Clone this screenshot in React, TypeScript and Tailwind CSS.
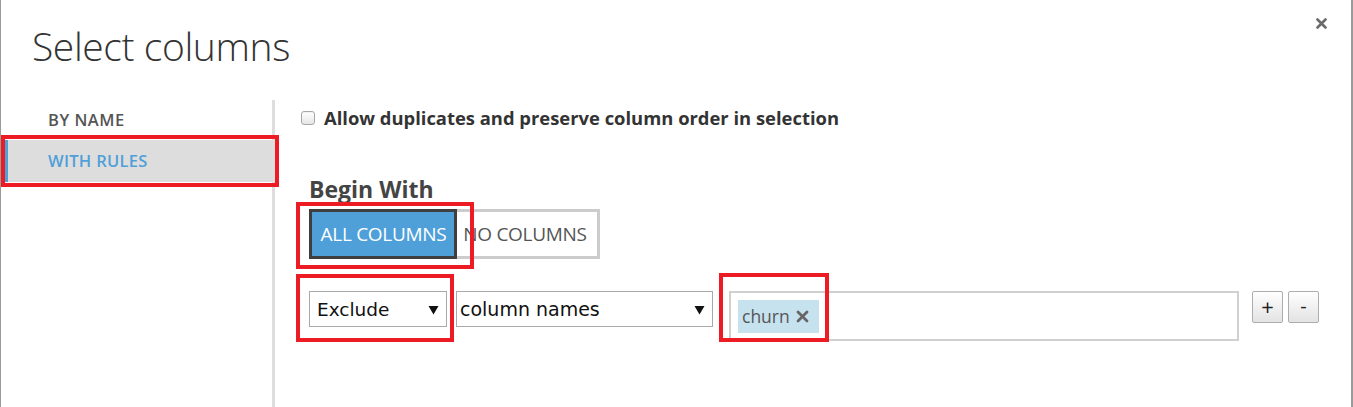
import React from "react";

function Caret() {
  return (
    <svg width="11" height="10" viewBox="0 0 11 10" className="shrink-0">
      <path d="M0.5 1 L10.5 1 L5.5 9.5 Z" fill="#111" />
    </svg>
  );
}

function RedBox({ className }: { className: string }) {
  return <div className={"absolute border-4 border-[#ed1c24] pointer-events-none " + className} />;
}

export default function App() {
  return (
    <div className="relative w-[1353px] h-[407px] bg-white border-l border-l-[#9a9a9a] border-r-2 border-r-[#9a9a9a] overflow-hidden font-['Open_Sans',sans-serif] text-[#444]">
      {/* close */}
      <button className="absolute left-[1314px] top-[17px] w-[13px] h-[13px] flex items-center justify-center">
        <svg width="11" height="11" viewBox="0 0 11 11">
          <path d="M1.5 1.5 L9.5 9.5 M9.5 1.5 L1.5 9.5" stroke="#6b6b6b" strokeWidth="2.6" strokeLinecap="round" />
        </svg>
      </button>

      <div className="h-[100px] pl-[31px] pt-[22px]">
        <h1 className="text-[39px] leading-[48px] font-light text-[#333] tracking-[-0.4px]">Select columns</h1>
      </div>

      <div className="flex h-[307px]">
        <aside className="w-[274px] shrink-0 border-r-[3px] border-r-[#dedede] pl-[2px]">
          <div className="h-[40px] flex items-center pl-[45px] text-[16.5px] font-semibold text-[#555] tracking-[0.5px]">
            BY NAME
          </div>
          <div className="h-[42px] flex items-center bg-[#dddddd] border-l-[5px] border-l-[#4f9fd9] pl-[40px] text-[16.5px] font-semibold text-[#4f9fd9] tracking-[0.3px]">
            WITH RULES
          </div>
        </aside>

        <main className="flex-1 pl-[26px]">
          <label className="flex items-center gap-[9px] mt-[6px] h-[24px]">
            <span className="w-[14px] h-[14px] rounded-[3px] border border-[#a8a8a8] bg-gradient-to-b from-white to-[#e6e6e6] shadow-[inset_0_1px_1px_rgba(0,0,0,0.05)]" />
            <span className="text-[18.4px] font-bold text-[#333] tracking-[0px]">
              Allow duplicates and preserve column order in selection
            </span>
          </label>

          <div className="pl-[8px]">
            <h2 className="mt-[45px] text-[23px] leading-[28px] font-bold text-[#444] tracking-[0px]">Begin With</h2>

            <div className="flex mt-[6px]">
              <button className="w-[148px] h-[50px] border-[3px] border-[#3f3f3f] bg-[#4f9fd9] text-white text-[19px] tracking-[-0.3px] pl-[1px]">
                ALL COLUMNS
              </button>
              <button className="w-[143px] h-[50px] border-[3px] border-l-0 border-[#cccccc] bg-white text-[#555] text-[19px] tracking-[-0.3px] pr-[4px]">
                NO COLUMNS
              </button>
            </div>

            <div className="flex items-start mt-[32px]">
              <div className="w-[138px] h-[36px] border border-[#a9a9a9] flex items-center justify-between pl-[7px] pr-[7px] pt-[1px] font-['DejaVu_Sans',sans-serif] text-[18.5px] text-[#111]">
                <span>Exclude</span>
                <Caret />
              </div>
              <div className="ml-[9px] w-[257px] h-[36px] border border-[#a9a9a9] flex items-center justify-between pl-[3px] pr-[7px] pt-[1px] font-['DejaVu_Sans',sans-serif] text-[19px] text-[#111]">
                <span>column names</span>
                <Caret />
              </div>
              <div className="ml-[16px] w-[510px] h-[50px] border-2 border-[#d0d0d0] flex items-start pl-[7px] pt-[7px]">
                <span className="h-[33px] w-[81px] bg-[#c7e2ef] flex items-center pl-[4px] gap-[6px] text-[17.5px] text-[#555] tracking-[0px]">
                  churn
                  <svg width="13" height="13" viewBox="0 0 13 13">
                    <path d="M2 2 L11 11 M11 2 L2 11" stroke="#666" strokeWidth="2.8" strokeLinecap="round" />
                  </svg>
                </span>
              </div>
              <button className="ml-[13px] w-[31px] h-[32px] rounded-[2px] border border-[#adadad] bg-gradient-to-b from-white to-[#e3e3e3] text-[22px] leading-none text-[#222] flex items-center justify-center pb-[2px]">
                +
              </button>
              <button className="ml-[5px] w-[31px] h-[32px] rounded-[2px] border border-[#adadad] bg-gradient-to-b from-white to-[#e3e3e3] text-[20px] leading-none text-[#222] flex items-center justify-center pb-[3px]">
                -
              </button>
            </div>
          </div>
        </main>
      </div>

      <RedBox className="left-0 top-[135px] w-[278px] h-[52px]" />
      <RedBox className="left-[295px] top-[202px] w-[178px] h-[67px]" />
      <RedBox className="left-[295px] top-[274px] w-[158px] h-[68px]" />
      <RedBox className="left-[718px] top-[273px] w-[110px] h-[69px]" />
    </div>
  );
}
